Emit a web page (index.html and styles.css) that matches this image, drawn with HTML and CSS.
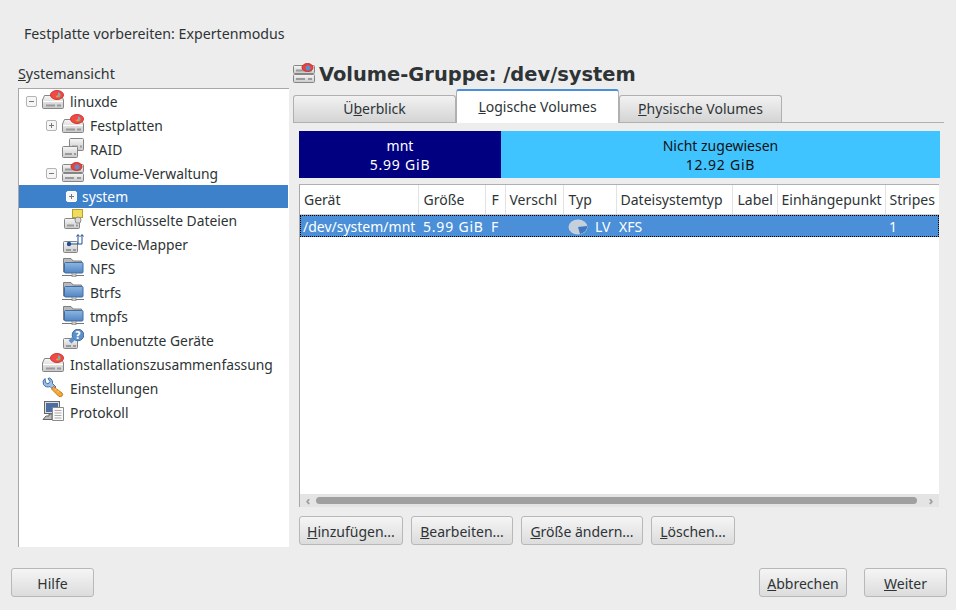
FILE: index.html
```html
<!DOCTYPE html>
<html lang="de">
<head>
  <meta charset="UTF-8">
  <link rel="stylesheet" href="styles.css">
  <title>Festplatte vorbereiten: Expertenmodus</title>
</head>
<body>
  <svg class="defs" width="0" height="0">
    <defs>
      <linearGradient id="metal" x1="0" y1="0" x2="0" y2="1">
        <stop offset="0" stop-color="#f6f6f6"/>
        <stop offset="1" stop-color="#c9c9c9"/>
      </linearGradient>
      <linearGradient id="blueFace" x1="0" y1="0" x2="0" y2="1">
        <stop offset="0" stop-color="#8fb5de"/>
        <stop offset="1" stop-color="#4f86c4"/>
      </linearGradient>
      <symbol id="drive" viewBox="0 0 22 20">
        <path d="M2.500 5.500H19.500L21.500 10V17.500A1 1 0 0 1 20.500 18.500H1.500A1 1 0 0 1 .5 17.500V10Z" fill="url(#metal)" stroke="#858585"/>
        <path d="M1 11.500H21" stroke="#fff"/>
        <path d="M4 15.500H13M15 15.500H19" stroke="#9a9a9a" stroke-width="2"/>
      </symbol>
      <symbol id="badge" viewBox="0 0 14 10">
        <ellipse cx="7" cy="5" rx="6.500" ry="4.500" fill="#ee4a46" stroke="#d5332f"/>
        <path d="M8 5V2.500A2.500 2.500 0 0 1 10.500 5Z" fill="#7fa9d8"/>
        <path d="M8 5H10.500A2.500 2.500 0 0 1 8 7.500Z" fill="#8ab36a"/>
        <path d="M8 5V7.500A2.500 2.500 0 0 1 5.800 6.200Z" fill="#e3a04c"/>
      </symbol>
      <symbol id="hdd" viewBox="0 0 22 20">
        <use href="#drive" width="22" height="20"/>
        <use href="#badge" x="8" y="0" width="14" height="10"/>
      </symbol>
      <symbol id="raid" viewBox="0 0 22 20">
        <rect x="7.500" y=".5" width="14" height="12" rx="1" fill="url(#metal)" stroke="#858585"/>
        <path d="M10 8.500H16M18 8.500H20" stroke="#9a9a9a" stroke-width="2"/>
        <rect x=".5" y="8.500" width="15" height="11" rx="1" fill="url(#metal)" stroke="#858585"/>
        <path d="M3 16H10M12 16H14" stroke="#9a9a9a" stroke-width="2"/>
      </symbol>
      <symbol id="lvm" viewBox="0 0 22 20">
        <rect x=".5" y="2.500" width="21" height="8" rx="1" fill="url(#metal)" stroke="#858585"/>
        <path d="M3 7.500H12M15 7.500H19" stroke="#9a9a9a" stroke-width="2"/>
        <rect x=".5" y="11.500" width="21" height="8" rx="1" fill="url(#metal)" stroke="#858585"/>
        <path d="M3 16H12M15 16H19" stroke="#9a9a9a" stroke-width="2"/>
        <ellipse cx="14.500" cy="4.500" rx="5.500" ry="4" fill="#e8423f" stroke="#c9302c"/>
        <circle cx="15" cy="5" r="2.500" fill="#5d8fc9"/>
      </symbol>
      <symbol id="crypt" viewBox="0 0 22 20">
        <rect x="10.500" y=".5" width="10" height="8" fill="#f3dc5c" stroke="#b5a030"/>
        <rect x="2.500" y="9.500" width="15" height="10" rx="1" fill="url(#metal)" stroke="#858585"/>
        <path d="M5 16.500H12M14 16.500H16" stroke="#9a9a9a" stroke-width="2"/>
        <path d="M13 11A3 3 0 0 1 19 11L18 14H14Z" fill="#d8d8d8" stroke="#8d8d8d"/>
      </symbol>
      <symbol id="mapper" viewBox="0 0 22 20">
        <rect x="1.500" y="8.500" width="14" height="11" rx="1" fill="url(#metal)" stroke="#858585"/>
        <path d="M4 17H9M11 17H14" stroke="#9a9a9a" stroke-width="2"/>
        <circle cx="7" cy="11" r="2.200" fill="#1f4e96"/>
        <path d="M7 11H20M16 11V2M20 11V2M14.500 3.500L16 1.500L17.500 3.500M18.500 3.500L20 1.500L21.500 3.500" fill="none" stroke="#1f4e96"/>
      </symbol>
      <symbol id="folder" viewBox="0 0 22 20">
        <path d="M1.500 15V1.500H9L11 4H19.500V15Z" fill="#b9b9b9" stroke="#808080"/>
        <rect x="2.500" y="5.500" width="18.500" height="10.500" rx="1" fill="url(#blueFace)" stroke="#3f6ea6"/>
        <path d="M0 18.500H22" stroke="#777"/>
        <rect x="10" y="16" width="4" height="4" fill="#c8c8c8" stroke="#777" stroke-width=".6"/>
      </symbol>
      <symbol id="unused" viewBox="0 0 22 20">
        <rect x="1.500" y="9.500" width="14" height="10" rx="1" fill="url(#metal)" stroke="#858585"/>
        <path d="M4 17H9M11 17H14" stroke="#9a9a9a" stroke-width="2"/>
        <circle cx="16" cy="6" r="5.800" fill="#5d8fc9" stroke="#3f6ea6"/>
        <path d="M11.500 9.500L8 13" stroke="#5d8fc9" stroke-width="4"/>
        <text x="16" y="9.500" text-anchor="middle" class="glyph">?</text>
      </symbol>
      <symbol id="wrench" viewBox="0 0 22 20">
        <path d="M3 1.500A5 5 0 0 0 1.500 7.500C3 10 6 10.500 8 9.500L11 12.500L14 10L10.500 6.500C11 4.500 10 2 7.500 1L6 1.500L8 4.500L6 7L3.500 5.500Z" fill="#9dbfe4" stroke="#3f6ea6"/>
        <path d="M11.500 9.500L20 16A2.300 2.300 0 0 1 16.500 19L9.500 12Z" fill="#f3a63a" stroke="#c47c17"/>
        <path d="M13 13L15 11.500M15.500 15L17.500 13.500" stroke="#fbd28c"/>
      </symbol>
      <symbol id="log" viewBox="0 0 22 20">
        <rect x="2.500" y=".5" width="15" height="12" fill="#dcdcdc" stroke="#666"/>
        <rect x="4" y="2" width="12" height="9" fill="#4a6ea3"/>
        <path d="M7 13V15H4L1 18.500H10V13Z" fill="#bdbdbd" stroke="#666"/>
        <path d="M10.500 6.500H21.500V19.500H10.500Z" fill="#fafafa" stroke="#8a8a8a"/>
        <path d="M12.500 9.500H19.500M12.500 12H19.500M12.500 14.500H19.500M12.500 17H19.500" stroke="#aaa"/>
      </symbol>
    </defs>
  </svg>

  <div class="page">
    <div class="title">Festplatte vorbereiten: Expertenmodus</div>

    <div class="main">
      <div class="left">
        <div class="tree-label"><u>S</u>ystemansicht</div>
        <div class="tree">
          <div class="row lvl1"><span class="exp minus"></span><svg class="ico"><use href="#hdd"/></svg>linuxde</div>
          <div class="row lvl2"><span class="exp plus"></span><svg class="ico"><use href="#hdd"/></svg>Festplatten</div>
          <div class="row lvl2"><span class="noexp"></span><svg class="ico"><use href="#raid"/></svg>RAID</div>
          <div class="row lvl2"><span class="exp minus"></span><svg class="ico"><use href="#lvm"/></svg>Volume-Verwaltung</div>
          <div class="row lvl3 selected"><span class="exp plus"></span>system</div>
          <div class="row lvl2"><span class="noexp"></span><svg class="ico"><use href="#crypt"/></svg>Verschlüsselte Dateien</div>
          <div class="row lvl2"><span class="noexp"></span><svg class="ico"><use href="#mapper"/></svg>Device-Mapper</div>
          <div class="row lvl2"><span class="noexp"></span><svg class="ico"><use href="#folder"/></svg>NFS</div>
          <div class="row lvl2"><span class="noexp"></span><svg class="ico"><use href="#folder"/></svg>Btrfs</div>
          <div class="row lvl2"><span class="noexp"></span><svg class="ico"><use href="#folder"/></svg>tmpfs</div>
          <div class="row lvl2"><span class="noexp"></span><svg class="ico"><use href="#unused"/></svg>Unbenutzte Geräte</div>
          <div class="row lvl1"><span class="noexp"></span><svg class="ico"><use href="#hdd"/></svg>Installationszusammenfassung</div>
          <div class="row lvl1"><span class="noexp"></span><svg class="ico"><use href="#wrench"/></svg>Einstellungen</div>
          <div class="row lvl1"><span class="noexp"></span><svg class="ico"><use href="#log"/></svg>Protokoll</div>
        </div>
      </div>

      <div class="right">
        <div class="heading"><svg class="ico"><use href="#lvm"/></svg><h1>Volume-Gruppe: /dev/system</h1></div>
        <div class="tabs">
          <div class="tab">Ü<u>b</u>erblick</div>
          <div class="tab active"><u>L</u>ogische Volumes</div>
          <div class="tab"><u>P</u>hysische Volumes</div>
        </div>
        <div class="tab-body">
          <div class="usage">
            <div class="used">mnt<br><span class="num">5.99 GiB</span></div>
            <div class="free">Nicht zugewiesen<br><span class="num">12.92 GiB</span></div>
          </div>
          <div class="list">
            <div class="list-area">
              <table>
                <colgroup>
                  <col class="c-dev"><col class="c-size"><col class="c-f"><col class="c-enc"><col class="c-type"><col class="c-fs"><col class="c-label"><col class="c-mount"><col class="c-stripes">
                </colgroup>
                <thead>
                  <tr><th>Gerät</th><th class="pad5">Größe</th><th class="pad6">F</th><th>Verschl</th><th class="pad5">Typ</th><th>Dateisystemtyp</th><th class="pad5">Label</th><th>Einhängepunkt</th><th>Stripes</th></tr>
                </thead>
                <tbody>
                  <tr class="sel-row">
                    <td class="dev">/dev/system/mnt</td><td class="pad5"><span class="num">5.99 GiB</span></td><td class="pad6">F</td><td></td>
                    <td class="pad5"><svg class="pie" viewBox="0 0 20 16"><ellipse cx="10" cy="8" rx="9.500" ry="7.500" fill="#c4d0dc"/><path d="M10 8L19 7C19.500 11 16 14 12 15Z" fill="#3f78bf"/></svg>LV</td>
                    <td class="dev">XFS</td><td></td><td></td><td>1</td>
                  </tr>
                </tbody>
              </table>
            </div>
            <div class="hscroll">
              <span class="arrow">&#8249;</span>
              <div class="thumb"></div>
              <span class="arrow">&#8250;</span>
            </div>
          </div>
          <div class="actions">
            <button class="w-add"><u>H</u>inzufügen...</button>
            <button class="w-edit"><u>B</u>earbeiten...</button>
            <button class="w-resize"><u>G</u>röße ändern...</button>
            <button class="w-del"><u>L</u>öschen...</button>
          </div>
        </div>
      </div>
    </div>

    <div class="footer">
      <button class="w-help">Hilfe</button>
      <div class="spacer"></div>
      <button class="w-cancel"><u>A</u>bbrechen</button>
      <button class="w-next"><u>W</u>eiter</button>
    </div>
  </div>
</body>
</html>
```

FILE: styles.css
```css
html, body {
  margin: 0;
  padding: 0;
}
body {
  width: 956px;
  height: 610px;
  overflow: hidden;
  background-color: #ededed;
  color: #2e3436;
  font-family: "Noto Sans", sans-serif;
  font-size: 14px;
}
.defs {
  display: block;
  height: 0;
}
.page {
  height: 610px;
  display: flex;
  flex-direction: column;
}
.title {
  padding: 24px 0 0 24px;
  height: 20px;
  line-height: 20px;
  font-size: 14.2px;
}
.main {
  margin: 18px 12px 0 18px;
  height: 485px;
  display: grid;
  grid-template-columns: 271px 651px;
  column-gap: 4px;
}
.left {
  display: flex;
  flex-direction: column;
}
.tree-label {
  padding-top: 2px;
  height: 20px;
  line-height: 20px;
  margin-bottom: 4px;
  font-size: 14.3px;
}
.tree {
  flex: 1;
  background-color: #fff;
  border-left: 1px solid #a8a8a8;
  border-top: 1px solid #a8a8a8;
  padding-top: 1px;
  font-size: 13.85px;
}
.row {
  height: 24px;
  box-sizing: border-box;
  padding-bottom: 2px;
  display: flex;
  align-items: center;
  white-space: nowrap;
}
.lvl1 { padding-left: 7px; }
.lvl2 { padding-left: 27px; }
.lvl3 { padding-left: 47px; }
.exp, .noexp {
  width: 11px;
  height: 11px;
  margin-right: 5px;
  flex: none;
  box-sizing: border-box;
}
.exp {
  border: 1px solid #b4b4b4;
  border-radius: 2px;
  background-color: #f6f6f6;
}
.exp.minus {
  background: linear-gradient(#777, #777) center / 5px 1px no-repeat, #f6f6f6;
}
.exp.plus {
  background: linear-gradient(#777, #777) center / 5px 1px no-repeat,
    linear-gradient(#777, #777) center / 1px 5px no-repeat, #f6f6f6;
}
.ico {
  width: 22px;
  height: 20px;
  margin: 0 6px 2px 0;
  flex: none;
}
.glyph {
  font-family: "DejaVu Sans", sans-serif;
  font-size: 10px;
  font-weight: bold;
  fill: #fff;
}
.selected {
  height: 23px;
  margin: -1px 1px 1px 0;
  padding-bottom: 0;
  background-color: #3d81ca;
  color: #fff;
}
.selected .exp {
  border-color: #fff;
}
.right {
  display: flex;
  flex-direction: column;
}
.heading {
  height: 27px;
  display: flex;
  align-items: flex-start;
}
.heading .ico {
  margin: 1px 4px 0 0;
}
h1 {
  margin: 0;
  font-family: "DejaVu Sans", sans-serif;
  font-size: 19.45px;
  line-height: 26px;
  font-weight: bold;
}
.tabs {
  height: 33px;
  display: flex;
  align-items: flex-end;
  border-bottom: 1px solid #b0b0b0;
}
.tab {
  width: 163px;
  height: 27px;
  box-sizing: border-box;
  line-height: 26px;
  text-align: center;
  border: 1px solid #b0b0b0;
  border-bottom: none;
  border-radius: 3px 3px 0 0;
  background: linear-gradient(#f2f2f2, #d4d4d4);
}
.tab.active {
  height: 34px;
  margin-bottom: -1px;
  line-height: 32px;
  background: #fff;
  border-top: 2px solid #4a90d9;
}
.tab-body {
  padding: 8px 5px 0 6px;
}
.usage {
  width: 641px;
  height: 47px;
  display: flex;
  text-align: center;
  font-size: 14px;
  line-height: 19px;
}
.num {
  letter-spacing: .8px;
}
.used {
  width: 202px;
  padding-top: 5px;
  background-color: #000080;
  color: #fff;
}
.free {
  flex: 1;
  padding-top: 5px;
  background-color: #40c4ff;
  color: #111;
}
.list {
  margin-top: 6px;
  width: 640px;
  height: 323px;
  box-sizing: border-box;
  border-left: 1px solid #a8a8a8;
  border-top: 1px solid #b0b0b0;
  background-color: #fff;
  display: flex;
  flex-direction: column;
}
.list-area {
  flex: 1;
}
table {
  width: 639px;
  table-layout: fixed;
  border-collapse: collapse;
}
.c-dev { width: 118px; }
.c-size { width: 67px; }
.c-f { width: 20px; }
.c-enc { width: 58px; }
.c-type { width: 53px; }
.c-fs { width: 116px; }
.c-label { width: 45px; }
.c-mount { width: 108px; }
.c-stripes { width: 54px; }
th {
  height: 29px;
  padding: 0 0 0 4px;
  font-weight: normal;
  text-align: left;
  white-space: nowrap;
  overflow: hidden;
  border-right: 1px solid #e2e2e2;
  border-bottom: 1px solid #cfcfcf;
}
th:last-child {
  border-right: none;
}
td {
  height: 22px;
  padding: 0 0 0 4px;
  white-space: nowrap;
  overflow: hidden;
  color: #fff;
}
th.pad5, td.pad5 {
  padding-left: 5px;
}
th.pad6, td.pad6 {
  padding-left: 6px;
}
.sel-row {
  background-color: #4a8fd8;
  outline: 1px dotted #000;
  outline-offset: -1px;
}
td.dev {
  padding-left: 3px;
}
.pie {
  width: 20px;
  height: 16px;
  margin-right: 7px;
  vertical-align: -3px;
}
.hscroll {
  height: 13px;
  display: flex;
  align-items: center;
  background-color: #e4e4e4;
  color: #9a9a9a;
}
.arrow {
  width: 16px;
  text-align: center;
  font-size: 12px;
  line-height: 13px;
  font-weight: bold;
}
.thumb {
  flex: 1;
  margin: 0 6px 0 0;
  height: 7px;
  border-radius: 4px;
  background-color: #a0a0a0;
}
.actions {
  margin-top: 9px;
  display: flex;
  gap: 8px;
}
button {
  height: 29px;
  padding: 1px 0 0;
  font-family: inherit;
  font-size: 14px;
  color: #2e3436;
  border: 1px solid #b8b8b8;
  border-radius: 3px;
  background: linear-gradient(#f5f5f5, #dcdcdc);
}
.w-add { width: 104px; }
.w-edit { width: 102px; }
.w-resize { width: 122px; }
.w-del { width: 84px; }
.w-help { width: 83px; }
.w-cancel { width: 88px; }
.w-next { width: 83px; margin-left: 17px; }
.footer {
  margin: 21px 9px 0 11px;
  display: flex;
}
.spacer {
  flex: 1;
}
```
